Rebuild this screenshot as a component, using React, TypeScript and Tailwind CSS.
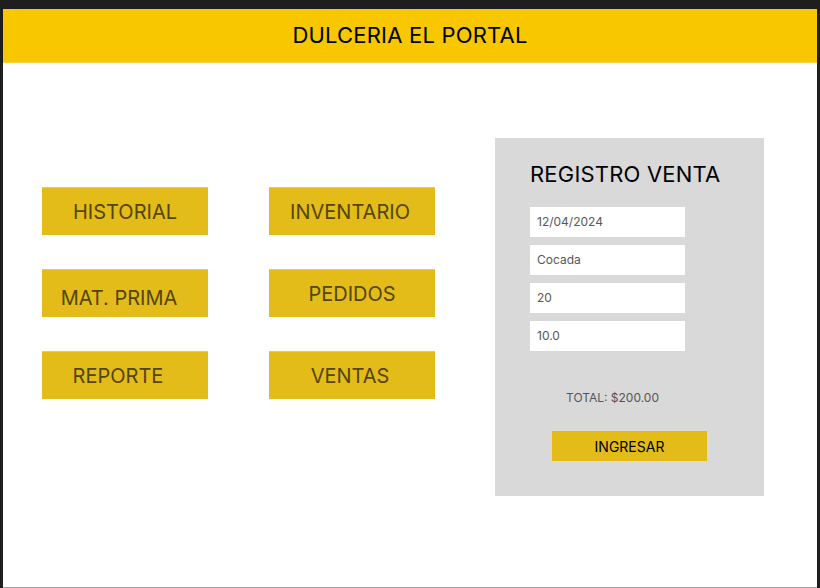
const menuItems = [
  { label: "HISTORIAL", extra: "" },
  { label: "INVENTARIO", extra: "pr-[4px]" },
  { label: "MAT. PRIMA", extra: "pt-[8px] pr-[12px]" },
  { label: "PEDIDOS", extra: "" },
  { label: "REPORTE", extra: "pr-[14px]" },
  { label: "VENTAS", extra: "pr-[4px]" },
];

const fields = ["12/04/2024", "Cocada", "20", "10.0"];

export default function App() {
  return (
    <div
      className="h-[588px] w-[820px] bg-[#1e1e1e] pt-[9px] px-[3px]"
      style={{ fontFamily: "Inter, 'Noto Sans', sans-serif" }}
    >
      <div className="h-full bg-white border-b border-[#a3a3a3] flex flex-col">
        <header className="h-[54px] bg-[#f8c700] border-b border-[#fbd440] flex items-center justify-center">
          <h1 className="text-[22px] text-black tracking-[0.2px]">DULCERIA EL PORTAL</h1>
        </header>

        <main className="flex items-start pl-[39px]">
          <div className="mt-[124px] grid grid-cols-[166px_166px] gap-x-[61px] gap-y-[34px]">
            {menuItems.map((item) => (
              <button
                key={item.label}
                className={`h-[48px] bg-[#e3bc1a] border-t border-[#e9cc55] flex items-center justify-center text-[20px] text-[#54450b] ${item.extra}`}
              >
                {item.label}
              </button>
            ))}
          </div>

          <section className="ml-[60px] mt-[75px] w-[269px] h-[358px] bg-[#d9d9d9] pl-[35px] pt-[24px]">
            <h2 className="text-[22px] leading-[24px] tracking-[0.2px] text-black">REGISTRO VENTA</h2>

            <div className="mt-[21px] flex flex-col gap-[8px]">
              {fields.map((value) => (
                <div
                  key={value}
                  className="w-[155px] h-[30px] bg-white pl-[7px] flex items-center text-[12px] text-[#575757]"
                >
                  {value}
                </div>
              ))}
            </div>

            <p className="mt-[38px] pl-[36px] text-[12px] text-[#555555]">TOTAL: $200.00</p>

            <button className="mt-[24px] ml-[22px] w-[155px] h-[30px] bg-[#e3bc1a] text-[14px] text-black flex items-center justify-center">
              INGRESAR
            </button>
          </section>
        </main>
      </div>
    </div>
  );
}
